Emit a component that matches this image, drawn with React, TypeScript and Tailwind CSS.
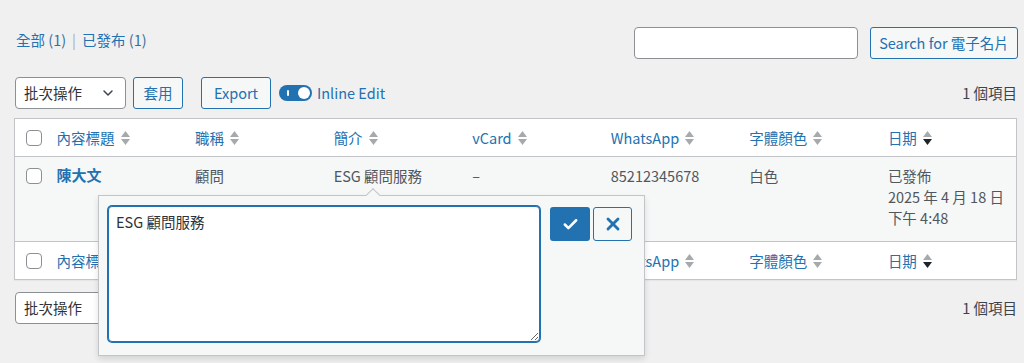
import React from 'react';
import { ChevronDown, Check, X } from 'lucide-react';

const font = { fontFamily: '"Noto Sans CJK TC", "Noto Sans", sans-serif' };

const SortIcon: React.FC<{ active?: boolean }> = ({ active }) => (
  <span className="ml-[6px] inline-flex flex-col items-center gap-[2px] align-middle">
    <svg width="9" height="6" viewBox="0 0 9 6">
      <path d="M4.5 0 L9 6 L0 6 Z" fill="#a7aaad" />
    </svg>
    <svg width="9" height="6" viewBox="0 0 9 6">
      <path d="M0 0 L9 0 L4.5 6 Z" fill={active ? '#1d2327' : '#a7aaad'} />
    </svg>
  </span>
);

const Checkbox: React.FC = () => (
  <span className="block w-4 h-4 rounded-[4px] border border-[#8c8f94] bg-white" />
);

const columns = ['內容標題', '職稱', '簡介', 'vCard', 'WhatsApp', '字體顏色', '日期'];

const HeaderRow: React.FC<{ top?: boolean }> = ({ top }) => (
  <tr className={top ? 'border-b border-[#c3c4c7]' : 'border-t border-[#c3c4c7]'}>
    <td className="h-[38px] pl-[11px] align-middle">
      <Checkbox />
    </td>
    {columns.map((c, i) => (
      <td key={c} className="px-[10px] align-middle">
        <span className="inline-flex items-center text-[#2271b1]">
          {c}
          <SortIcon active={i === 6} />
        </span>
      </td>
    ))}
  </tr>
);

const BulkSelect: React.FC = () => (
  <div className="w-[111px] h-[32px] rounded-[4px] border border-[#8c8f94] bg-white flex items-center justify-between pl-[8px] pr-[9px] text-[#2c3338]">
    <span>批次操作</span>
    <ChevronDown size={16} strokeWidth={2.2} className="text-[#3c434a]" />
  </div>
);

const SecondaryButton: React.FC<{ children: React.ReactNode; className?: string }> = ({ children, className }) => (
  <button className={`h-[32px] rounded-[3px] border border-[#2271b1] bg-[#f6f7f7] text-[#2271b1] ${className ?? ''}`}>
    {children}
  </button>
);

const App: React.FC = () => {
  return (
    <div className="min-h-[363px] w-full bg-[#f0f0f1] pl-[14px] pr-[6px] text-[14.5px] text-[#3c434a]" style={font}>
      {/* status links + search */}
      <div className="flex items-start justify-between pt-[27px]">
        <div className="pt-[2px] pl-[2px] flex items-center gap-[6px] text-[#2271b1] text-[14.5px]">
          <span>全部 <span className="text-[#3a6f9c]">(1)</span></span>
          <span className="text-[#a7aaad]">|</span>
          <span>已發布 <span className="text-[#3a6f9c]">(1)</span></span>
        </div>
        <div className="flex items-center gap-[12px]">
          <div className="w-[224px] h-[32px] rounded-[4px] border border-[#8c8f94] bg-white" />
          <SecondaryButton className="w-[148px]">Search for 電子名片</SecondaryButton>
        </div>
      </div>

      {/* top tablenav */}
      <div className="mt-[18px] flex items-center justify-between">
        <div className="flex items-center pl-[1px]">
          <BulkSelect />
          <SecondaryButton className="ml-[7px] w-[50px]">套用</SecondaryButton>
          <SecondaryButton className="ml-[18px] w-[70px]">Export</SecondaryButton>
          <div className="ml-[8px] flex items-center gap-[5px]">
            <span className="relative w-[33px] h-[16px] rounded-full bg-[#2271b1] flex items-center">
              <span className="absolute left-[8px] top-[5px] w-[2px] h-[6px] bg-white rounded-[1px]" />
              <span className="absolute right-[2px] top-[2px] w-[12px] h-[12px] rounded-full bg-white" />
            </span>
            <span className="text-[#2271b1]">Inline Edit</span>
          </div>
        </div>
        <span className="pr-[1px]">1 個項目</span>
      </div>

      {/* table */}
      <div className="relative mt-[9px] w-[1003px]">
        <table className="w-full table-fixed border border-[#c3c4c7] bg-white shadow-[0_1px_1px_rgba(0,0,0,0.04)] border-collapse">
          <colgroup>
            <col className="w-[32px]" />
            {columns.map((c) => (
              <col key={c} />
            ))}
          </colgroup>
          <thead>
            <HeaderRow top />
          </thead>
          <tbody>
            <tr className="bg-[#f6f7f7] h-[85px] text-[#50575e]">
              <td className="pl-[11px] pt-[11px] align-top">
                <Checkbox />
              </td>
              <td className="px-[10px] pt-[7px] align-top">
                <span className="font-bold text-[#2271b1] text-[15px]">陳大文</span>
              </td>
              <td className="px-[10px] pt-[8px] align-top">顧問</td>
              <td className="px-[10px] pt-[8px] align-top">ESG 顧問服務</td>
              <td className="px-[10px] pt-[8px] align-top">–</td>
              <td className="px-[10px] pt-[8px] align-top">85212345678</td>
              <td className="px-[10px] pt-[8px] align-top">白色</td>
              <td className="px-[10px] pt-[8px] align-top leading-[21px]">
                已發佈
                <br />
                2025 年 4 月 18 日
                <br />
                下午 4:48
              </td>
            </tr>
          </tbody>
          <tfoot>
            <HeaderRow />
          </tfoot>
        </table>

        {/* inline edit popover */}
        <div className="absolute left-[84px] top-[77px] w-[547px] h-[161px] border border-[#c3c4c7] bg-[#f6f7f7] shadow-[0_3px_6px_rgba(0,0,0,0.12)] flex items-start pt-[10px] pl-[9px]">
          <span className="absolute left-[269px] top-[-6px] w-[10px] h-[10px] rotate-45 border-l border-t border-[#c3c4c7] bg-[#f6f7f7]" />
          <textarea
            defaultValue="ESG 顧問服務"
            className="w-[432px] h-[136px] rounded-[4px] border border-[#2271b1] shadow-[0_0_0_1px_#2271b1] bg-white px-[7px] py-[4px] text-[14.5px] text-[#2c3338] outline-none"
            style={font}
          />
          <div className="ml-[10px] mt-[1px] flex gap-[3px]">
            <button className="w-[40px] h-[34px] rounded-[3px] bg-[#2271b1] flex items-center justify-center">
              <Check size={17} strokeWidth={3.6} className="text-white" />
            </button>
            <button className="w-[39px] h-[34px] rounded-[3px] border border-[#2271b1] bg-[#f6f7f7] flex items-center justify-center">
              <X size={20} strokeWidth={3.4} className="text-[#2271b1]" />
            </button>
          </div>
        </div>
      </div>

      {/* bottom tablenav */}
      <div className="mt-[12px] flex items-center justify-between">
        <div className="pl-[1px]">
          <BulkSelect />
        </div>
        <span className="pr-[1px]">1 個項目</span>
      </div>
    </div>
  );
};

export default App;
